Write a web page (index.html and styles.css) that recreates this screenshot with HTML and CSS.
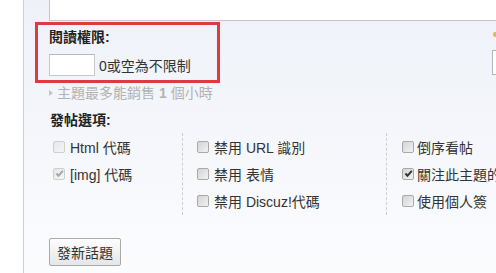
FILE: index.html
```html
<!DOCTYPE html>
<html lang="zh-Hant">
<head>
    <meta charset="UTF-8">
    <title>發新話題</title>
    <link rel="stylesheet" href="styles.css">
</head>
<body>
    <div class="panel">
        <div class="editor"></div>

        <div class="top-row">
            <div class="perm-box">
                <div class="label">閱讀權限:</div>
                <div class="field">
                    <span class="input"></span>
                    <span class="hint">0或空為不限制</span>
                </div>
            </div>
            <div class="side">
                <span class="side-mark"></span>
                <span class="side-input"></span>
            </div>
        </div>

        <div class="tip"><span class="arrow"></span>主題最多能銷售 <b>1</b> 個小時</div>

        <div class="label opts-title">發帖選項:</div>

        <div class="options">
            <div class="col col-first">
                <div class="opt disabled"><span class="cb"></span>Html 代碼</div>
                <div class="opt disabled"><span class="cb checked"><svg viewBox="0 0 11 11"><path d="M2.5 5.5 L4.5 7.8 L8.8 2.8" /></svg></span>[img] 代碼</div>
            </div>
            <div class="col col-mid">
                <div class="opt"><span class="cb"></span>禁用 URL 識別</div>
                <div class="opt"><span class="cb"></span>禁用 表情</div>
                <div class="opt"><span class="cb"></span>禁用 Discuz!代碼</div>
            </div>
            <div class="col col-last">
                <div class="opt"><span class="cb"></span>倒序看帖</div>
                <div class="opt"><span class="cb checked"><svg viewBox="0 0 11 11"><path d="M2.5 5.5 L4.5 7.8 L8.8 2.8" /></svg></span>關注此主題的</div>
                <div class="opt"><span class="cb"></span>使用個人簽</div>
            </div>
        </div>

        <button class="btn">發新話題</button>
    </div>
</body>
</html>
```

FILE: styles.css
```css
body {
    margin: 0;
    background: #fff;
    font-family: "Liberation Sans", "Noto Sans CJK TC", sans-serif;
    font-size: 14px;
    color: #333;
    overflow: hidden;
}

.panel {
    margin-left: 23px;
    height: 273px;
    padding-left: 25px;
    border-left: 1px solid #cfcfcf;
    background: linear-gradient(#eef2f8 0%, #f4f6fb 45%, #fbfcfe 100%);
    box-sizing: border-box;
    overflow: hidden;
}

.editor {
    height: 20px;
    background: #fff;
    border-left: 1px solid #c6c6c6;
    border-bottom: 1px solid #c6c6c6;
}

/* fila superior */
.top-row {
    display: flex;
    margin-left: -14px;
    margin-top: 1px;
}

.perm-box {
    flex: none;
    width: 185px;
    height: 61px;
    box-sizing: border-box;
    border: 3px solid #e0393e;
    padding: 3px 0 0 11px;
}

.label {
    font-weight: bold;
    color: #222;
    line-height: 18px;
}

.field {
    display: flex;
    align-items: center;
    margin-top: 8px;
}

.input {
    width: 44px;
    height: 20px;
    background: #fff;
    border: 1px solid #c8c8c8;
    border-top-color: #b8b8b8;
}

.hint {
    margin-left: 4px;
    color: #333;
}

.side {
    flex: none;
    margin-left: 272px;
    padding-top: 10px;
}

.side-mark {
    display: block;
    width: 6px;
    height: 5px;
    margin-left: 1px;
    border-radius: 2px;
    background: #f0b060;
}

.side-input {
    display: block;
    width: 40px;
    height: 23px;
    margin-top: 13px;
    border: 1px solid #b5b5b5;
    background: #fff;
}

/* consejo */
.tip {
    margin-top: 1px;
    line-height: 18px;
    color: #b2b2b2;
    display: flex;
    align-items: center;
}

.tip b {
    margin: 0 4px;
}

.arrow {
    width: 0;
    height: 0;
    border-left: 4px solid #c4c4c4;
    border-top: 3px solid transparent;
    border-bottom: 3px solid transparent;
    margin: 0 4px 0 0;
}

.opts-title {
    margin: 9px 0 0 1px;
}

/* opciones */
.options {
    display: flex;
    margin-top: 4px;
}

.col {
    flex: none;
    height: 82px;
    box-sizing: border-box;
}

.col-first {
    width: 133px;
    padding-left: 4px;
}

.col-mid {
    width: 204px;
    border-left: 1px dashed #cdcdcd;
    padding-left: 14px;
}

.col-last {
    border-left: 1px dashed #cdcdcd;
    padding-left: 15px;
}

.opt {
    display: flex;
    align-items: center;
    height: 27px;
    color: #333;
    white-space: nowrap;
}

.cb {
    width: 10px;
    height: 10px;
    margin-right: 5px;
    border: 1px solid #a9a9a9;
    border-radius: 2px;
    background: linear-gradient(135deg, #d4d4d4, #f2f2f2);
    position: relative;
    flex: none;
}

.cb svg {
    position: absolute;
    left: -0.5px;
    top: -0.5px;
    width: 11px;
    height: 11px;
}

.cb svg path {
    fill: none;
    stroke: #333;
    stroke-width: 2;
}

.disabled .cb {
    border-color: #cfcfcf;
    background: linear-gradient(135deg, #e6e6e6, #f6f6f6);
}

.disabled .cb svg path {
    stroke: #a5a5a5;
}

.col-last .cb {
    margin-right: 3px;
}

.btn {
    display: block;
    margin-top: 23px;
    width: 72px;
    height: 28px;
    padding: 0;
    font-family: "Liberation Sans", "Noto Sans CJK TC", sans-serif;
    font-size: 14px;
    color: #333;
    border: 1px solid #a9a9a9;
    border-radius: 2px;
    background: linear-gradient(#fdfdfd, #e6e6e6);
}
```
